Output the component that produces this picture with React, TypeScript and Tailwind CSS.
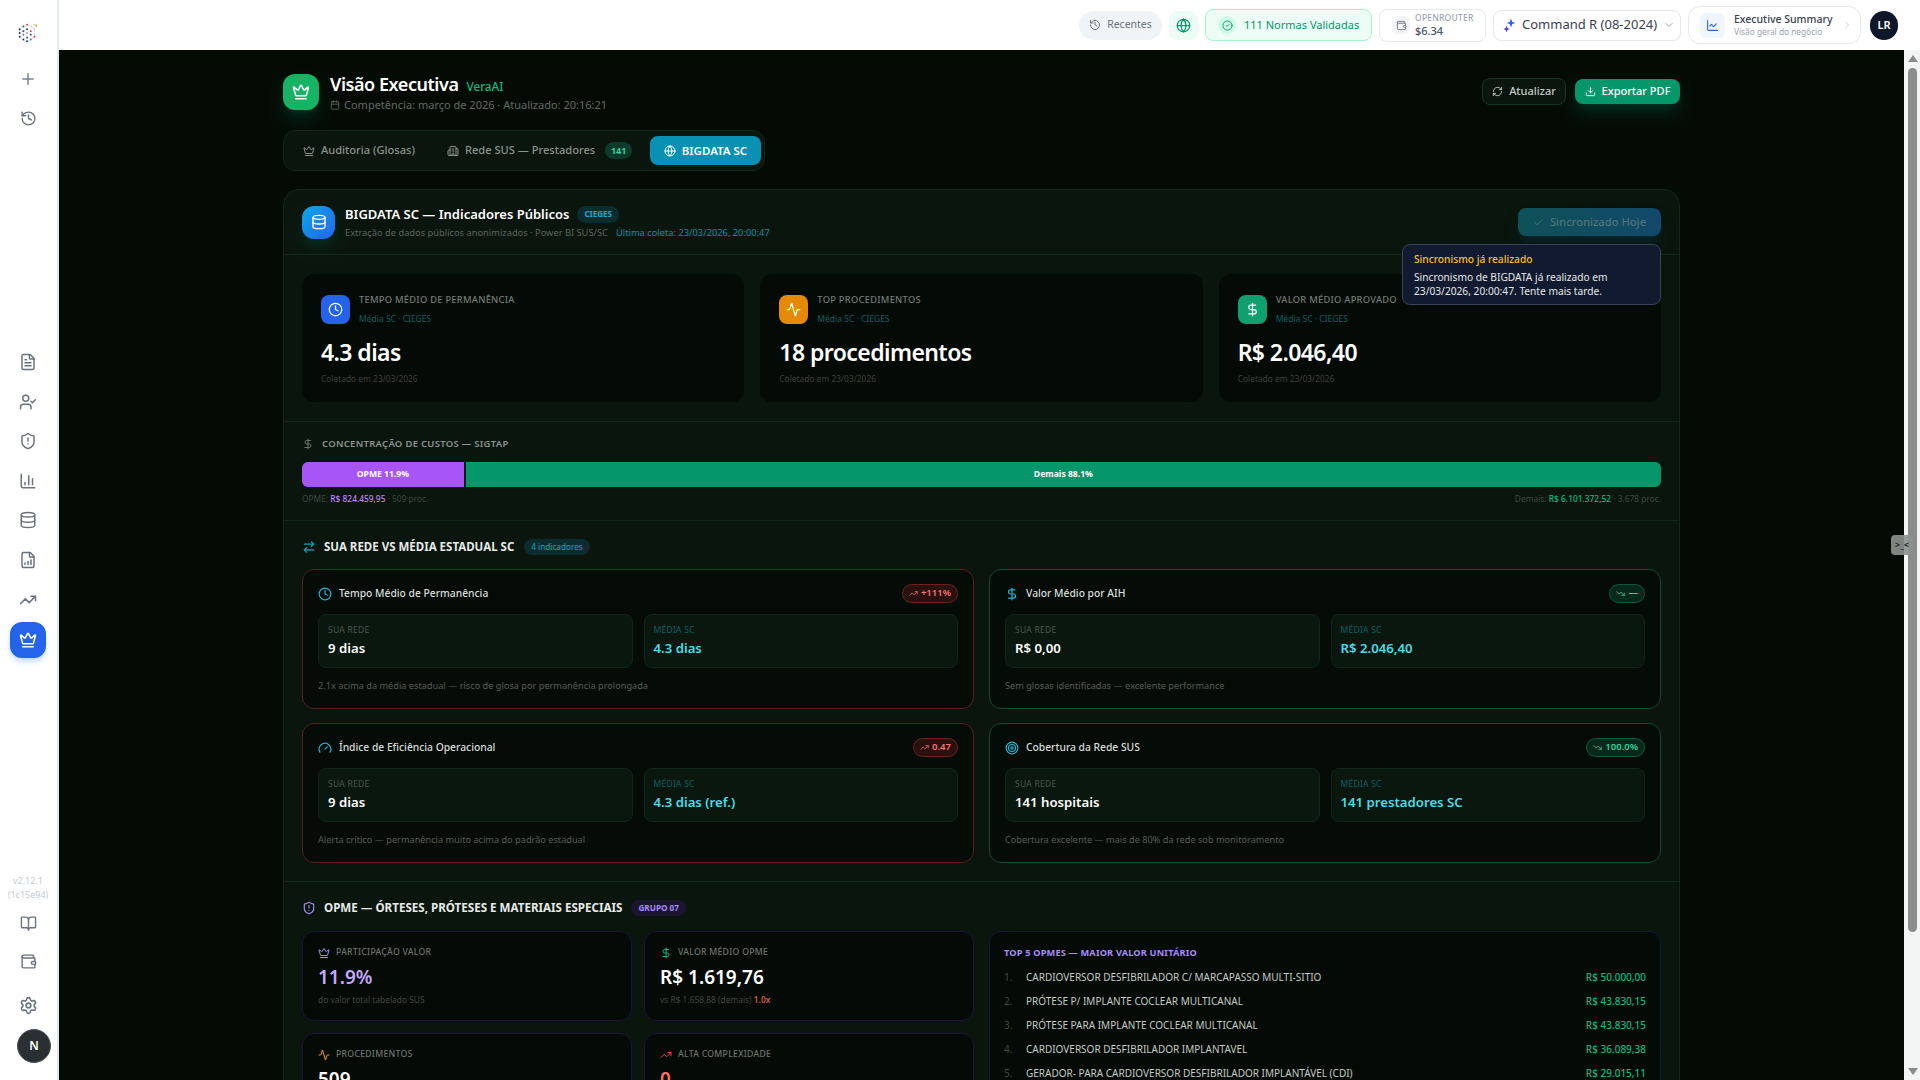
import {
  Activity,
  ArrowRightLeft,
  BarChart3,
  BookOpen,
  Building2,
  Calendar,
  Check,
  ChevronDown,
  ChevronRight,
  Clock,
  Crown,
  Database,
  DollarSign,
  Download,
  FileBarChart,
  FileText,
  Gauge,
  Globe,
  History,
  LineChart,
  Plus,
  RefreshCw,
  Settings,
  ShieldAlert,
  Target,
  TrendingDown,
  TrendingUp,
  UserCheck,
  Wallet,
  CircleCheck,
} from 'lucide-react';

const sideTop = [FileText, UserCheck, ShieldAlert, BarChart3, Database, FileBarChart, TrendingUp];

const stats = [
  { label: 'Tempo Médio de Permanência', value: '4.3 dias', icon: Clock, color: 'bg-[#2563eb]' },
  { label: 'Top Procedimentos', value: '18 procedimentos', icon: Activity, color: 'bg-[#e48a08]' },
  { label: 'Valor Médio Aprovado', value: 'R$ 2.046,40', icon: DollarSign, color: 'bg-[#10a070]' },
];

const compare = [
  {
    title: 'Tempo Médio de Permanência',
    icon: Clock,
    bad: true,
    pill: '+111%',
    mine: '9 dias',
    sc: '4.3 dias',
    note: '2.1x acima da média estadual — risco de glosa por permanência prolongada',
  },
  {
    title: 'Valor Médio por AIH',
    icon: DollarSign,
    bad: false,
    pill: '—',
    mine: 'R$ 0,00',
    sc: 'R$ 2.046,40',
    note: 'Sem glosas identificadas — excelente performance',
  },
  {
    title: 'Índice de Eficiência Operacional',
    icon: Gauge,
    bad: true,
    pill: '0.47',
    mine: '9 dias',
    sc: '4.3 dias (ref.)',
    note: 'Alerta crítico — permanência muito acima do padrão estadual',
  },
  {
    title: 'Cobertura da Rede SUS',
    icon: Target,
    bad: false,
    pill: '100.0%',
    mine: '141 hospitais',
    sc: '141 prestadores SC',
    note: 'Cobertura excelente — mais de 80% da rede sob monitoramento',
  },
];

const topOpmes = [
  ['CARDIOVERSOR DESFIBRILADOR C/ MARCAPASSO MULTI-SITIO', 'R$ 50.000,00'],
  ['PRÓTESE P/ IMPLANTE COCLEAR MULTICANAL', 'R$ 43.830,15'],
  ['PRÓTESE PARA IMPLANTE COCLEAR MULTICANAL', 'R$ 43.830,15'],
  ['CARDIOVERSOR DESFIBRILADOR IMPLANTAVEL', 'R$ 36.089,38'],
  ['GERADOR- PARA CARDIOVERSOR DESFIBRILADOR IMPLANTÁVEL (CDI)', 'R$ 29.015,11'],
];

function Logo() {
  const dots = [
    [3, 9, '#1e3a8a'], [3, 13, '#1e3a8a'], [3, 17, '#334155'], [7, 6, '#475569'], [7, 11, '#334155'],
    [7, 15, '#64748b'], [7, 20, '#1e3a8a'], [11, 4, '#ef4444'], [11, 9, '#334155'], [11, 13, '#94a3b8'],
    [11, 18, '#475569'], [11, 22, '#1e3a8a'], [15, 6, '#cbd5e1'], [15, 11, '#ef4444'], [15, 15, '#475569'],
    [15, 20, '#64748b'], [19, 4, '#cbd5e1'], [19, 9, '#cbd5e1'], [19, 17, '#ef4444'], [21, 5, '#f59e0b'],
  ] as const;
  return (
    <svg width="24" height="24" viewBox="0 0 24 26">
      <path d="M3 8 11 3.5 19 8v10l-8 4.5L3 18z" fill="none" stroke="#cbd5e1" strokeWidth="0.7" />
      {dots.map(([x, y, c], i) => (
        <circle key={i} cx={x} cy={y} r="1.1" fill={c} />
      ))}
    </svg>
  );
}

function CohereMark() {
  return (
    <svg width="13" height="15" viewBox="0 0 13 15">
      <path d="M8 0.5 9.2 4 12.5 5 9.2 6 8 9.5 6.8 6 3.5 5 6.8 4z" fill="#2563eb" />
      <path d="M3.5 7.5 4.4 10 6.8 11 4.4 12 3.5 14.5 2.6 12 0.5 11 2.6 10z" fill="#4f46e5" />
    </svg>
  );
}

function Sidebar() {
  return (
    <aside className="w-[59px] shrink-0 h-full bg-white border-r-2 border-[#e2e8f0] flex flex-col items-center pr-[1px] text-[#6b7280]">
      <div className="h-[66px] shrink-0 flex items-center justify-center">
        <Logo />
      </div>
      <Plus className="w-[18px] h-[18px] mt-[4px] text-[#7b828c]" />
      <History className="w-[17px] h-[17px] mt-[22px] text-[#6b7280]" />
      <div className="mt-[226px] flex flex-col items-center gap-[21.6px]">
        {sideTop.map((Icon, i) => (
          <Icon key={i} className="w-[18px] h-[18px]" />
        ))}
      </div>
      <div className="mt-[13px] w-9 h-9 rounded-xl bg-[#2563eb] flex items-center justify-center shadow-md shadow-blue-200">
        <Crown className="w-[18px] h-[18px] text-white" />
      </div>
      <div className="mt-auto flex flex-col items-center">
        <div className="text-[9px] leading-[13.5px] text-[#c3cad3] text-center">
          v2.12.1
          <br />
          (1c15e94)
        </div>
        <BookOpen className="w-[17px] h-[17px] mt-[14px]" />
        <Wallet className="w-[17px] h-[17px] mt-[21px]" />
        <Settings className="w-[19px] h-[19px] mt-[26px]" />
        <div className="mt-[14px] mb-[17px] ml-[12px] w-[34px] h-[34px] rounded-full bg-[#2b2f31] border border-[#4b5563] text-white text-[12px] font-semibold flex items-center justify-center">
          N
        </div>
      </div>
    </aside>
  );
}

function TopBar() {
  return (
    <header className="h-[50px] shrink-0 bg-white flex items-center justify-end pr-[22px] gap-[7px]">
      <div className="h-[29px] w-[83px] rounded-full bg-[#f1f4f6] flex items-center justify-center gap-[6px] text-[10.5px] text-[#6b7280]">
        <History className="w-3 h-3" />
        Recentes
      </div>
      <div className="h-[29px] w-[29px] rounded-lg bg-[#ecfdf5] flex items-center justify-center">
        <Globe className="w-[15px] h-[15px] text-[#059669]" />
      </div>
      <div className="h-[32px] w-[167px] rounded-lg bg-[#ecfdf5] border border-[#a7f3d0] flex items-center pl-[12px] gap-[8px] text-[11px] text-[#059669]">
        <span className="w-[18px] h-[18px] rounded-full bg-[#d1fae5] flex items-center justify-center">
          <CircleCheck className="w-[11px] h-[11px]" />
        </span>
        111 Normas Validadas
      </div>
      <div className="h-[33px] w-[107px] rounded-lg bg-white border border-[#e5e7eb] flex items-center pl-[12px] gap-[5px]">
        <span className="w-[18px] h-[18px] rounded-md bg-[#f3f4f6] flex items-center justify-center">
          <Wallet className="w-[11px] h-[11px] text-[#6b7280]" />
        </span>
        <div className="leading-none">
          <div className="text-[8.5px] font-medium text-[#9ca3af] tracking-wide">OPENROUTER</div>
          <div className="text-[11px] font-medium text-[#4b5563] mt-[2px]">$6.34</div>
        </div>
      </div>
      <div className="h-[31px] w-[188px] rounded-lg bg-white border border-[#e5e7eb] flex items-center pl-[9px] gap-[6px] text-[13px] text-[#374151]">
        <CohereMark />
        Command R (08-2024)
        <ChevronDown className="w-3 h-3 text-[#9ca3af]" />
      </div>
      <div className="h-[38px] w-[173px] rounded-xl bg-white border border-[#e5e7eb] flex items-center pl-[11px]">
        <span className="w-[25px] h-[25px] rounded-md bg-[#eff6ff] flex items-center justify-center">
          <LineChart className="w-[13px] h-[13px] text-[#2563eb]" />
        </span>
        <div className="ml-[9px] w-[107px] leading-none">
          <div className="text-[10.5px] font-medium text-[#374151]">Executive Summary</div>
          <div className="text-[8.3px] text-[#9ca3af] mt-[3px]">Visão geral do negócio</div>
        </div>
        <ChevronRight className="w-3 h-3 text-[#d1d5db]" />
      </div>
      <div className="ml-[2px] h-[29px] w-[28px] rounded-full bg-[#0f172a] text-white text-[11px] font-semibold flex items-center justify-center">
        LR
      </div>
    </header>
  );
}

function PageHeader() {
  return (
    <div className="flex items-start justify-between h-9">
      <div className="flex items-start gap-[11px]">
        <div className="w-9 h-9 rounded-xl bg-[#16b364] flex items-center justify-center shadow-lg shadow-emerald-900/50">
          <Crown className="w-[18px] h-[18px] text-white" />
        </div>
        <div>
          <div className="flex items-baseline gap-2 leading-[21px]">
            <span className="text-[18px] font-semibold tracking-tight text-white">Visão Executiva</span>
            <span className="text-[11.7px] font-medium text-[#10b981]">VeraAI</span>
          </div>
          <div className="flex items-center gap-1 text-[11px] text-[#5f6a64] leading-[16px]">
            <Calendar className="w-[10px] h-[10px]" />
            Competência: março de 2026 · Atualizado: 20:16:21
          </div>
        </div>
      </div>
      <div className="flex items-center gap-[9px] mt-1">
        <button className="h-[27px] w-[84px] rounded-lg border border-[#173323] bg-[#0a150d] text-[#c3c9c5] text-[11px] font-medium flex items-center justify-center gap-[6px]">
          <RefreshCw className="w-[11px] h-[11px]" />
          Atualizar
        </button>
        <button className="h-[25px] w-[105px] rounded-lg bg-[#059669] text-white text-[11px] font-medium flex items-center justify-center gap-[6px] shadow-lg shadow-emerald-900/50">
          <Download className="w-[11px] h-[11px]" />
          Exportar PDF
        </button>
      </div>
    </div>
  );
}

function Tabs() {
  return (
    <div className="mt-5 h-[41px] w-[482px] rounded-xl bg-[#0a150d] border border-[#12261a] flex items-center pl-[19px] pr-[3px] text-[11.1px] font-medium text-[#8b938e]">
      <Crown className="w-[12px] h-[12px]" />
      <span className="ml-[6px]">Auditoria (Glosas)</span>
      <Building2 className="w-[12px] h-[12px] ml-[32px]" />
      <span className="ml-[6px]">Rede SUS — Prestadores</span>
      <span className="ml-[10px] h-[17px] w-[27px] rounded-full bg-[#0d3a2a] text-[#34d399] text-[9px] font-bold flex items-center justify-center">
        141
      </span>
      <div className="ml-auto w-[111px] h-[29px] rounded-lg bg-[#0891b2] text-white text-[11.5px] font-semibold flex items-center justify-center gap-[6px]">
        <Globe className="w-[12px] h-[12px]" />
        BIGDATA SC
      </div>
    </div>
  );
}

function CardHeader() {
  return (
    <div className="relative h-[65px] border-b border-[#12261a] pl-[18px] pr-[18px] flex items-center justify-between">
      <div className="flex items-center gap-[10px]">
        <div className="w-[33px] h-[33px] rounded-xl bg-gradient-to-br from-[#0ea5e9] to-[#2563eb] flex items-center justify-center shadow-lg shadow-emerald-900/40">
          <Database className="w-[16px] h-[16px] text-white" />
        </div>
        <div>
          <div className="flex items-center gap-2 leading-[20px]">
            <span className="text-[13px] font-semibold text-white">BIGDATA SC — Indicadores Públicos</span>
            <span className="h-[17px] px-[7px] rounded-full bg-[#0b2c2f] text-[#22a7c7] text-[8px] font-bold flex items-center">CIEGES</span>
          </div>
          <div className="mt-[2px] text-[9.3px] leading-[14px] text-[#5a645e]">
            Extração de dados públicos anonimizados · Power BI SUS/SC
            <span className="ml-2 text-[#0e8ea8]">Última coleta: 23/03/2026, 20:00:47</span>
          </div>
        </div>
      </div>
      <button className="h-[28px] w-[143px] rounded-lg bg-gradient-to-r from-[#0e5157] to-[#12496b] text-[#4f7378] text-[11.2px] font-medium flex items-center justify-center gap-[6px] shadow-lg shadow-cyan-950/50">
        <Check className="w-[11px] h-[11px]" />
        Sincronizado Hoje
      </button>
      <div className="absolute z-10 top-[54px] right-[18px] w-[259px] h-[61px] rounded-lg bg-[#111a2e] border border-[#3a4356] px-[11px] pt-[7px] text-[10.2px]">
        <div className="font-medium text-[#fbbf24] leading-[14px]">Sincronismo já realizado</div>
        <div className="mt-[4px] text-[#e5e7eb] leading-[14px]">
          Sincronismo de BIGDATA já realizado em 23/03/2026, 20:00:47. Tente mais tarde.
        </div>
      </div>
    </div>
  );
}

function StatCards() {
  return (
    <div className="border-b border-[#12261a] px-[18px] pt-[19px] pb-[19px] grid grid-cols-3 gap-[16px]">
      {stats.map(({ label, value, icon: Icon, color }) => (
        <div key={label} className="h-[128px] rounded-xl bg-[#040a05] px-[19px] pt-[21px]">
          <div className="flex gap-[9px]">
            <div className={`w-[29px] h-[29px] rounded-lg ${color} flex items-center justify-center`}>
              <Icon className="w-[15px] h-[15px] text-white" />
            </div>
            <div>
              <div className="text-[9.3px] leading-[10px] uppercase tracking-[0.03em] font-medium text-[#727c76]">{label}</div>
              <div className="mt-[9px] text-[8.5px] leading-[10px] text-[#0f5f63]">Média SC · CIEGES</div>
            </div>
          </div>
          <div className="mt-[12px] text-[23px] leading-[32px] font-semibold tracking-tight text-white">{value}</div>
          <div className="mt-[5px] text-[8.4px] leading-[12px] text-[#3a423d]">Coletado em 23/03/2026</div>
        </div>
      ))}
    </div>
  );
}

function CostBar() {
  return (
    <div className="h-[99px] border-b border-[#12261a] px-[18px] pt-[14px]">
      <div className="flex items-center gap-[8px] h-4">
        <DollarSign className="w-[12px] h-[12px] text-[#6b7570]" />
        <span className="text-[9.5px] uppercase tracking-[0.03em] font-semibold text-[#8a938e]">
          Concentração de Custos — SIGTAP
        </span>
      </div>
      <div className="mt-[10px] h-[25px] rounded-md overflow-hidden flex gap-[2px] text-[8.6px] font-bold text-white">
        <div className="w-[11.9%] bg-[#a855f7] flex items-center justify-center">OPME 11.9%</div>
        <div className="flex-1 bg-[#059669] flex items-center justify-center">Demais 88.1%</div>
      </div>
      <div className="mt-[6px] flex justify-between text-[8.4px] leading-[12px] text-[#3f4843]">
        <span>
          OPME: <span className="font-medium text-[#c084fc]">R$ 824.459,95</span> · 509 proc.
        </span>
        <span>
          Demais: <span className="font-medium text-[#10b981]">R$ 6.101.372,52</span> · 3.678 proc.
        </span>
      </div>
    </div>
  );
}

function CompareCard({ item }: { item: (typeof compare)[number] }) {
  const { title, icon: Icon, bad, pill, mine, sc, note } = item;
  const Trend = bad ? TrendingUp : TrendingDown;
  return (
    <div className={`h-[140px] rounded-xl bg-[#050b06] border px-[15px] pt-[14px] ${bad ? 'border-[#5c1d1d]' : 'border-[#0f4a33]'}`}>
      <div className="flex items-center justify-between h-[19px]">
        <div className="flex items-center gap-[7px] text-[10.3px] font-medium text-[#d9dedb]">
          <Icon className="w-[14px] h-[14px] text-[#22b8d8]" />
          {title}
        </div>
        <span
          className={`h-[19px] px-[6px] rounded-full border flex items-center gap-[3px] text-[9.5px] font-semibold ${
            bad ? 'border-[#6b2320] bg-[#2a110e] text-[#f87171]' : 'border-[#11573b] bg-[#07291c] text-[#34d399]'
          }`}
        >
          <Trend className="w-[9px] h-[9px]" />
          {pill}
        </span>
      </div>
      <div className="mt-[11px] grid grid-cols-2 gap-[11px]">
        <div className="h-[54px] rounded-lg bg-[#0a170e] border border-[#10241a] px-[9px] pt-[9px]">
          <div className="text-[8.5px] leading-[12px] uppercase tracking-[0.03em] text-[#4b5650]">Sua Rede</div>
          <div className="mt-[2px] text-[13.2px] leading-[20px] font-semibold text-white">{mine}</div>
        </div>
        <div className="h-[54px] rounded-lg bg-[#0a170e] border border-[#10241a] px-[9px] pt-[9px]">
          <div className="text-[8.5px] leading-[12px] uppercase tracking-[0.03em] text-[#0f5f63]">Média SC</div>
          <div className="mt-[2px] text-[13.2px] leading-[20px] font-semibold text-[#4adbe8]">{sc}</div>
        </div>
      </div>
      <div className="mt-[11px] text-[9.2px] leading-[14px] text-[#545e58]">{note}</div>
    </div>
  );
}

function Compare() {
  return (
    <div className="h-[361px] border-b border-[#12261a] px-[18px] pt-[17px]">
      <div className="flex items-center gap-[8px] h-[18px]">
        <ArrowRightLeft className="w-[14px] h-[14px] text-[#14a5c4]" />
        <span className="text-[11.5px] uppercase font-bold text-[#e6eae8]">Sua Rede vs Média Estadual SC</span>
        <span className="ml-[2px] h-[16px] px-[7px] rounded-full bg-[#0b2c2f] text-[#14a5c4] text-[8.2px] flex items-center">4 indicadores</span>
      </div>
      <div className="mt-[13px] grid grid-cols-2 gap-x-[15px] gap-y-[14px]">
        {compare.map((item) => (
          <CompareCard key={item.title} item={item} />
        ))}
      </div>
    </div>
  );
}

function Opme() {
  const tile = 'h-[90px] rounded-xl bg-[#040a05] border border-[#1c1433] px-[15px] pt-[14px]';
  const tileLabel = 'text-[8.7px] uppercase tracking-[0.03em] font-medium text-[#6b7570]';
  const tileSub = 'mt-[3px] text-[8.4px] leading-[12px] text-[#3f4843]';
  return (
    <div className="px-[18px] pt-[17px]">
      <div className="flex items-center gap-[8px] h-[18px]">
        <ShieldAlert className="w-[14px] h-[14px] text-[#a78bfa]" />
        <span className="text-[11.6px] uppercase font-bold text-[#e6eae8]">OPME — Órteses, Próteses e Materiais Especiais</span>
        <span className="ml-[1px] h-[16px] px-[7px] rounded-full bg-[#1b1630] text-[#a78bfa] text-[8.2px] font-bold flex items-center">GRUPO 07</span>
      </div>
      <div className="mt-[14px] grid grid-cols-2 gap-[15px]">
        <div className="grid grid-cols-2 gap-x-[12px] gap-y-[12px] content-start">
          <div className={tile}>
            <div className="flex items-center gap-[6px]">
              <Crown className="w-[12px] h-[12px] text-[#a78bfa]" />
              <span className={tileLabel}>Participação Valor</span>
            </div>
            <div className="mt-[4px] text-[19px] leading-[28px] font-semibold text-[#c4a8fb]">11.9%</div>
            <div className={tileSub}>do valor total tabelado SUS</div>
          </div>
          <div className={tile}>
            <div className="flex items-center gap-[6px]">
              <DollarSign className="w-[12px] h-[12px] text-[#10b981]" />
              <span className={tileLabel}>Valor Médio OPME</span>
            </div>
            <div className="mt-[4px] text-[19px] leading-[28px] font-semibold text-white">R$ 1.619,76</div>
            <div className={tileSub}>
              vs R$ 1.658,88 (demais) <span className="font-medium text-[#ea6a45]">1.0x</span>
            </div>
          </div>
          <div className={tile}>
            <div className="flex items-center gap-[6px]">
              <Activity className="w-[12px] h-[12px] text-[#f59e0b]" />
              <span className={tileLabel}>Procedimentos</span>
            </div>
            <div className="mt-[4px] text-[19px] leading-[28px] font-semibold text-white">509</div>
          </div>
          <div className={tile}>
            <div className="flex items-center gap-[6px]">
              <TrendingUp className="w-[12px] h-[12px] text-[#ef4444]" />
              <span className={tileLabel}>Alta Complexidade</span>
            </div>
            <div className="mt-[4px] text-[19px] leading-[28px] font-semibold text-[#f87171]">0</div>
          </div>
        </div>
        <div className="h-[192px] rounded-xl bg-[#040a05] border border-[#12183a] px-[14px] pt-[14px]">
          <div className="text-[9.2px] leading-[14px] uppercase font-bold tracking-[0.02em] text-[#a78bfa]">Top 5 OPMEs — Maior Valor Unitário</div>
          <div className="mt-[6px] flex flex-col">
            {topOpmes.map(([name, value], i) => (
              <div key={name} className="h-[23.8px] flex items-center text-[10px]">
                <span className="w-[22px] text-[#3f4843]">{i + 1}.</span>
                <span className="flex-1 text-[#c5cbc7]">{name}</span>
                <span className="font-medium text-[#10b981]">{value}</span>
              </div>
            ))}
          </div>
        </div>
      </div>
    </div>
  );
}

function FakeScrollbar() {
  return (
    <div className="w-[16px] shrink-0 bg-[#f3f5f5] flex flex-col items-center pt-[5px] pl-[1px]">
      <span className="w-0 h-0 border-x-[5px] border-x-transparent border-b-[7px] border-b-[#8b8b8b]" />
      <div className="mt-[6px] w-[9px] h-[864px] rounded-full bg-[#8b8b8b]" />
      <span className="mt-auto mb-[5px] w-0 h-0 border-x-[5px] border-x-transparent border-t-[7px] border-t-[#8b8b8b]" />
    </div>
  );
}

export default function App() {
  return (
    <div className="relative w-screen h-screen overflow-hidden flex bg-white [font-family:'Noto_Sans',sans-serif]">
      <Sidebar />
      <div className="flex-1 min-w-0 flex flex-col">
        <TopBar />
        <div className="flex-1 min-h-0 flex">
          <main className="flex-1 min-w-0 overflow-hidden bg-[#040b05] pt-6">
            <div className="w-[1397px] mx-auto">
              <PageHeader />
              <Tabs />
              <section className="mt-[18px] rounded-2xl bg-[#0a150d] border border-[#12261a] h-[1000px]">
                <CardHeader />
                <StatCards />
                <CostBar />
                <Compare />
                <Opme />
              </section>
            </div>
          </main>
          <FakeScrollbar />
        </div>
      </div>
      <div className="absolute right-[7px] top-[535px] w-[22px] h-[20px] rounded-sm bg-[#8d918f]/90 text-[#1f2937] text-[9px] font-bold flex items-center justify-center">
        &gt;_&lt;
      </div>
    </div>
  );
}
